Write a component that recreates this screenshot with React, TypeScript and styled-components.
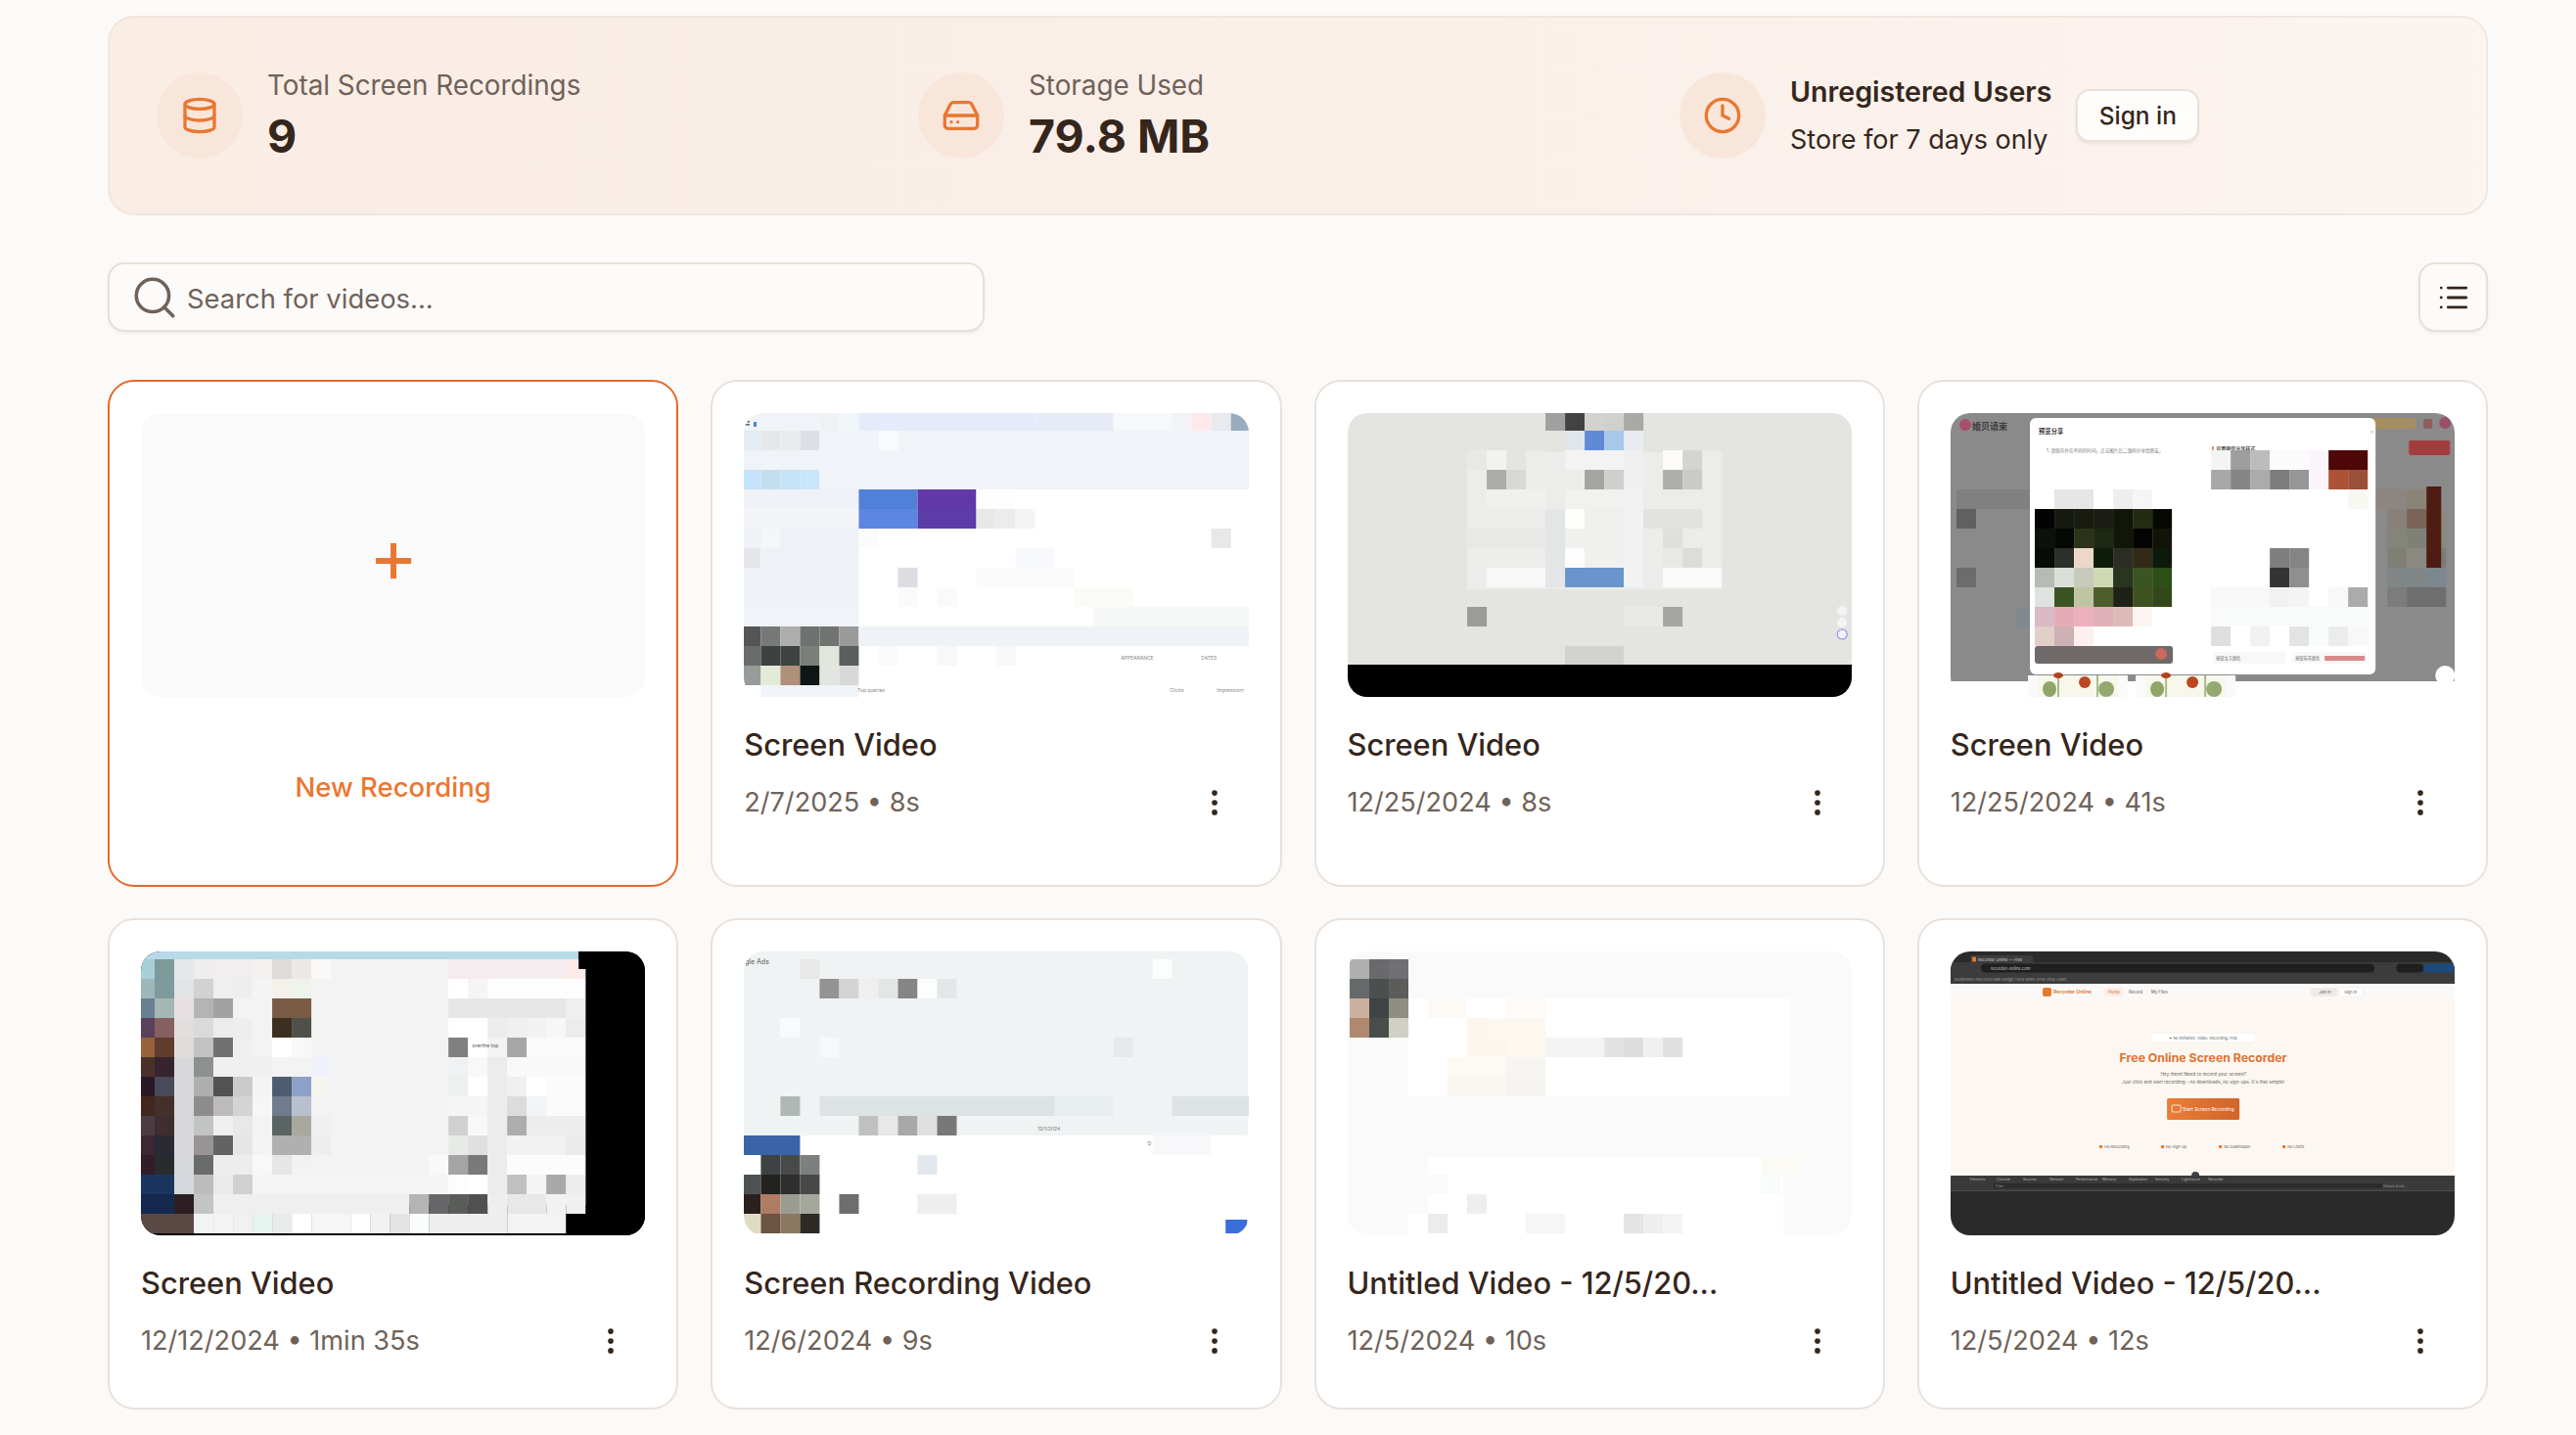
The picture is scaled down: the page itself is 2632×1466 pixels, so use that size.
import styled, { createGlobalStyle } from 'styled-components';
import { Clock, Database, EllipsisVertical, HardDrive, List, Plus, Search } from 'lucide-react';
import type { ReactNode } from 'react';

const GlobalStyle = createGlobalStyle`
  html, body {
    margin: 0;
    padding: 0;
    background: #fcfaf8;
    font-family: Inter, "Noto Sans", sans-serif;
    color: #35261c;
  }
  * {
    box-sizing: border-box;
  }
`;

const Page = styled.main`
  height: 1466px;
  overflow: hidden;
  padding: 16px 90px 0 110px;
`;

const Banner = styled.section`
  display: grid;
  grid-template-columns: repeat(3, 1fr);
  align-items: center;
  height: 204px;
  padding: 0 46px 0 48px;
  border: 2px solid #f0e6de;
  border-radius: 27px;
  background: linear-gradient(90deg, #f9ede4 0%, #faefe9 50%, #fcf4ef 100%);
`;

const Stat = styled.div`
  display: flex;
  align-items: center;
  gap: 25px;
`;

const IconCircle = styled.div`
  display: flex;
  align-items: center;
  justify-content: center;
  flex: none;
  width: 88px;
  height: 88px;
  border-radius: 50%;
  background: #f9e6da;
  color: #ea7731;
`;

const StatText = styled.div`
  padding-bottom: 3px;
`;

const StatLabel = styled.div`
  font-size: 27.8px;
  line-height: 40px;
  color: #6f6259;
`;

const StatValue = styled.div`
  margin-top: 5px;
  font-size: 46.5px;
  font-weight: 700;
  line-height: 54px;
  color: #35261c;
`;

const NoticeTitle = styled.div`
  font-size: 28.6px;
  font-weight: 600;
  line-height: 40px;
`;

const NoticeText = styled.div`
  margin-top: 9px;
  font-size: 27px;
  line-height: 40px;
`;

const SignIn = styled.button`
  flex: none;
  width: 126px;
  height: 54px;
  border: 2px solid #e9e1da;
  border-radius: 14px;
  background: #fffdfc;
  box-shadow: 0 2px 3px rgba(60, 40, 25, 0.08);
  font: 500 24.5px Inter, sans-serif;
  color: #35261c;
`;

const Toolbar = styled.div`
  display: flex;
  align-items: center;
  justify-content: space-between;
  margin-top: 48px;
`;

const SearchBox = styled.label`
  display: flex;
  align-items: center;
  gap: 8px;
  width: 896px;
  height: 71px;
  padding-left: 21px;
  border: 2px solid #e7dfd8;
  border-radius: 17px;
  background: #fdfbf9;
  box-shadow: 0 2px 3px rgba(60, 40, 25, 0.06);
  color: #6f6259;
`;

const SearchInput = styled.input`
  flex: 1;
  padding: 2px 0 0;
  border: 0;
  outline: 0;
  background: transparent;
  font: 400 27.4px Inter, sans-serif;
  color: #6f6259;

  &::placeholder {
    color: #6f6259;
    opacity: 1;
  }
`;

const ViewButton = styled.button`
  display: flex;
  align-items: center;
  justify-content: center;
  width: 71px;
  height: 71px;
  padding: 0;
  border: 2px solid #e7dfd8;
  border-radius: 17px;
  background: #fdfbf9;
  box-shadow: 0 2px 3px rgba(60, 40, 25, 0.06);
  color: #35261c;
`;

const Grid = styled.div`
  display: grid;
  grid-template-columns: repeat(4, 1fr);
  gap: 32px 33px;
  margin-top: 49px;
`;

const Card = styled.article<{ $accent?: boolean }>`
  display: flex;
  flex-direction: column;
  min-width: 0;
  padding: 32px 32px 48px;
  border: 2px solid ${(p) => (p.$accent ? '#e2692d' : '#e9e1da')};
  border-radius: 27px;
  background: #fff;
`;

const NewCard = styled(Card)`
  height: 518px;
`;

const Thumb = styled.div`
  width: 100%;
  height: 290px;
  border-radius: 20px;
  overflow: hidden;
  background: #fff;
`;

const PictureSvg = styled.svg`
  display: block;
  width: 100%;
  height: 100%;
`;

const Placeholder = styled(Thumb)`
  display: flex;
  align-items: center;
  justify-content: center;
  padding-top: 12px;
  background: #fafafa;
  color: #ea7731;
`;

const NewLabel = styled.div`
  margin-top: 72px;
  font-size: 27.5px;
  font-weight: 500;
  line-height: 40px;
  text-align: center;
  color: #ea7731;
`;

const Title = styled.h3`
  margin: 29px 0 0;
  font-size: 30.8px;
  font-weight: 500;
  line-height: 40px;
  white-space: nowrap;
  color: #35261c;
`;

const MetaRow = styled.div`
  display: flex;
  align-items: center;
  justify-content: space-between;
  margin-top: 19px;
  padding-right: 18px;
  height: 40px;
`;

const Meta = styled.span`
  font-size: 27.1px;
  line-height: 40px;
  color: #6f6259;
`;

const MoreIcon = styled(EllipsisVertical)`
  color: #35261c;
`;

/* mosaic thumbnails: each row is "col:color" or "from-to:color", later entries paint over earlier ones */
const Mosaic = ({ ox, oy, rows }: { ox: number; oy: number; rows: string[] }) => (
  <>
    {rows.flatMap((row, r) =>
      row
        .split(' ')
        .filter(Boolean)
        .map((entry, i) => {
          const [span, fill] = entry.split(':');
          const [from, to] = span.split('-').map(Number);
          const count = (to ?? from) - from + 1;
          return (
            <rect key={`${r}-${i}`} x={ox + from * 20} y={oy + r * 20} width={count * 20} height={20} fill={fill} />
          );
        })
    )}
  </>
);

const Picture = ({ children }: { children: ReactNode }) => (
  <PictureSvg viewBox="0 0 515 290" preserveAspectRatio="none" fontFamily="Inter, 'Noto Sans CJK SC', sans-serif">
    {children}
  </PictureSvg>
);

const SearchConsoleThumb = () => (
  <Picture>
    <rect width="515" height="290" fill="#fff" />
    <Mosaic
      ox={-2.6}
      oy={-2}
      rows={[
        '0-3:#f0f4f8 4:#eef2f4 5:#f1f6fb 6-14:#e5ebfa 15-18:#e6ebf7 19-22:#f6f8fb 22:#f2f3f6 23:#fde8ea 24:#e8eaee 25:#9aadc0',
        '0:#e4ecf3 1:#e5e7ea 2:#e9ebee 3:#dcdfe3 4-25:#f0f3f8 7:#f8fafc',
        '0-25:#f0f3f8',
        '0:#c5e3fb 1:#c2deee 2:#c5e2f6 3:#c8e6fc 4-25:#f0f3f8',
        '0-5:#eff2f6 6-8:#5180d8 9-11:#6238a8 12-13:#fdfdfd',
        '0-5:#f2f4f8 6-8:#5b86e2 9-11:#5c3ca8 12:#e8e8e8 13:#ececec 14:#f4f4f4',
        '0-5:#eef1f6 1:#f4f6f9 6:#fbfbfb 24:#e8e8e8',
        '0:#e4e6ea 1-5:#eef1f6 14-15:#f7f9fc',
        '0-5:#eef1f6 8:#dcdce2 12-16:#fafafa',
        '0-5:#eef1f6 8:#fafafa 10:#fafafa 17-19:#fafaf6',
        '0-5:#f0f3f7 18-25:#f6f8f8',
        '0:#555558 1:#777977 2:#aeaeae 3:#6f7270 4:#707370 5:#9a9a9a 6-25:#eff3f7',
        '0:#6a6c6c 1:#3d4240 2:#3e4240 3:#7b7f7c 4:#e2e5dc 5:#5b5e5e 7:#fafafa 10:#f8f8f8 13:#f8f8f8',
        '0:#979c98 1:#e3ebd8 2:#b09078 3:#0f1616 4:#e3e5e0 5:#d8d8d8',
        '1-5:#f0f4f8',
      ]}
    />
    <rect x="0" y="8" width="6" height="1.5" fill="#666" />
    <rect x="0" y="11" width="6" height="1.5" fill="#666" />
    <rect x="10" y="9" width="3" height="5" fill="#4f7fe0" />
    <text x="116" y="285" fontSize="5" fill="#888">Top queries</text>
    <text x="435" y="285" fontSize="5" fill="#888">Clicks</text>
    <text x="483" y="285" fontSize="5" fill="#888">Impressions</text>
    <text x="385" y="252" fontSize="5" fill="#888">APPEARANCE</text>
    <text x="467" y="252" fontSize="5" fill="#888">DATES</text>
  </Picture>
);

const PagesThumb = () => (
  <Picture>
    <rect width="515" height="290" fill="#e4e4e1" />
    <rect x="122" y="40" width="260" height="140" fill="#ececea" />
    <Mosaic
      ox={2}
      oy={-2}
      rows={[
        '10:#a0a0a0 11:#424242 12:#d2d2d0 13:#d0d0ce 14:#a9a9a6',
        '11:#e0e6ea 12:#5f8ad6 13:#a8c8ea 14:#e8ecf2',
        '6:#e8e8e6 7:#f2f2f0 8:#e4e4e2 9:#ececea 11-13:#f3f3f3 14:#eef0f2 16:#fdfcfa 17:#d4d4d2 18:#ececea',
        '7:#acacaa 8:#d8d8d6 9:#ececea 12:#a4a4a2 13:#cfcfcd 14:#eef0f2 16:#adadab 17:#cacac8',
        '7-9:#f0f0ee 11-13:#f1f1ef 14:#f0f2f4',
        '7-9:#ececea 10:#e2e6e6 11:#fdfdfc 12-13:#efefed 14:#f0f2f4 15-17:#e2e2e0',
        '6-9:#e8e8e6 10:#e2e6e6 11-13:#f0f0ee 14:#f0f2f4 16:#dfdfdd',
        '6-9:#ededeb 10:#e2e6e6 11:#fdfdfd 12-13:#f0f0ee 14:#f0f2f4 16:#e8e8e6 17:#dcdcda',
        '6:#ececea 7-9:#f8f8f8 10:#e2e6e6 11-13:#6a94cc 14:#f0f2f4 15:#ececea 16-18:#fafafa',
        '',
        '6:#9c9c9a 13:#e4e4e2 14-15:#e9e9e7 16:#a5a5a3',
        '',
        '11-13:#d2d2d0',
      ]}
    />
    <rect y="257" width="515" height="33" fill="#000" />
    <circle cx="505" cy="202" r="5" fill="#f4f4f4" />
    <circle cx="505" cy="214" r="5" fill="#f4f4f4" />
    <circle cx="505" cy="226" r="5" fill="#f0f0ff" stroke="#8a8ae0" strokeWidth="1" />
  </Picture>
);

const PlantCard = ({ x }: { x: number }) => (
  <g>
    <rect x={x} y="268" width="102" height="22" fill="#fafafa" />
    <rect x={x + 10} y="268" width="82" height="22" fill="#f7f7ec" />
    <ellipse cx={x + 22} cy="282" rx="7" ry="8" fill="#8fa56a" />
    <rect x={x + 30} y="268" width="2" height="22" fill="#a9ba88" />
    <ellipse cx={x + 80} cy="282" rx="8" ry="8" fill="#93a970" />
    <rect x={x + 70} y="268" width="2" height="22" fill="#a9ba88" />
    <ellipse cx={x + 31} cy="268" rx="5" ry="3" fill="#b2401f" />
    <circle cx={x + 58} cy="275" r="6" fill="#bc4720" />
  </g>
);

const WeddingThumb = () => (
  <Picture>
    <rect width="515" height="290" fill="#fff" />
    <rect width="515" height="274" fill="#8a8a8a" />
    <circle cx="15" cy="12" r="6" fill="#a8506a" />
    <text x="15" y="13" fontSize="9" fill="#3d3d3d" fontWeight="600" dy="4" dx="7">婚贝请柬</text>
    <rect x="429" y="5" width="46" height="11" rx="3" fill="#a68e60" />
    <rect x="483" y="6" width="9" height="10" rx="2" fill="#8f5c5c" />
    <circle cx="505" cy="10" r="6" fill="#9a5064" />
    <rect x="468" y="28" width="42" height="15" rx="2" fill="#a33d3d" />
    <Mosaic
      ox={6}
      oy={-2}
      rows={[
        '',
        '',
        '',
        '',
        '0-3:#808080 21-23:#8c8580 23:#8c8378',
        '0:#5f6160 22:#88807a 23:#7a6458 24:#8c8a80',
        '22:#84847a 23:#7e8276 24:#868a7a',
        '22:#7e8074 23:#8a8880 24:#7c7c76',
        '0:#6c6c6c 22-23:#808686 24:#7c8890',
        '22:#7c7c7c 23-24:#6e6e6e',
        '3:#828890',
      ]}
    />
    <rect x="486" y="75" width="15" height="83" fill="#4f1c14" />
    <rect x="81" y="5" width="353" height="262" rx="6" fill="#fff" />
    <text x="90" y="21" fontSize="6.3" fontWeight="700" fill="#333">预览分享</text>
    <text x="428" y="21" fontSize="6" fill="#aaa">×</text>
    <text x="98" y="40" fontSize="4.6" fill="#777">1. 请保存并在不同的时间，点击图片后二维码分享给朋友，</text>
    <rect x="267" y="34" width="1.6" height="5" fill="#e57373" />
    <text x="271" y="38" fontSize="5" fontWeight="600" fill="#444">设置微信分享样式</text>
    <Mosaic
      ox={6}
      oy={-2}
      rows={[
        '',
        '',
        '13:#f4f4f4 14:#9e9e9e 15:#bcbcbc 16-17:#fbfbfb 18:#faf5fa 19-20:#4e0808',
        '13:#a8a8a8 14:#858585 15:#ababab 16:#7d7d7d 17:#969696 18:#fbf5fb 19:#ad5335 20:#9b503a',
        '5-6:#e6e6e6 8:#eeeeee 9:#f6f6f6 20:#f7f8f2',
        '4:#030402 5:#15190f 6:#181c10 7:#1b1c14 8:#12150a 9:#232b12 10:#060803',
        '4:#0a120a 5:#050804 6:#2d3319 7:#1e2914 8:#111708 9:#040503 10:#11140a',
        '4:#050d04 5:#2d302a 6:#ecd8c8 7:#101c0a 8:#2c2e26 9:#322a17 10:#0c1a0e 16:#7e7e7e 17:#858585',
        '4:#b4bcb4 5:#dadfd8 6:#c8cabc 7:#d0d8b4 8:#29351f 9:#3c5424 10:#2e4f18 16:#333333 17:#8f8f8f',
        '4:#dfe3df 5:#3a5424 6:#c0c4a0 7:#4f5c2c 8:#1e2116 9:#3f5220 10:#33481a 13-15:#f8f8f8 16:#f1f1f1 17:#f4f4f4 19:#f8f8f8 20:#ababab',
        '4:#dbb9c6 5:#e5acb8 6:#ecb0bf 7:#dfb0ba 8:#dcbcb8 9:#fdf4f2 13-20:#f9fbfb',
        '4:#e2cfc8 5:#ccb0b4 6:#fdf0ee 13:#dfdfdf 15:#f0f2f0 17:#e3e3e3 18:#f7fbfb 19:#ececec 20:#f8f8f8',
      ]}
    />
    <rect x="86" y="238" width="141" height="18" rx="3" fill="#6f6969" />
    <circle cx="215" cy="246" r="6" fill="#c96a5c" />
    <rect x="268" y="244" width="75" height="12" rx="3" fill="#f8f8f8" />
    <rect x="349" y="244" width="76" height="12" rx="3" fill="#f8f8f8" />
    <rect x="382" y="248" width="41" height="5" fill="#d98a8a" />
    <text x="271" y="252" fontSize="4.2" fill="#666">按钮文字颜色</text>
    <text x="352" y="252" fontSize="4.2" fill="#666">按钮背景颜色</text>
    <PlantCard x={79} />
    <PlantCard x={189} />
    <circle cx="505" cy="268" r="10" fill="#fff" />
  </Picture>
);

const DesktopThumb = () => (
  <Picture>
    <rect width="515" height="290" fill="#000" />
    <rect x="0" y="0" width="447" height="8" fill="#b8dae8" />
    <rect x="34" y="8" width="420" height="251" fill="#f3f3f3" />
    <Mosaic
      ox={-6}
      oy={8}
      rows={[
        '0:#a7d0d8 1:#7d9a9a 2:#e5e7e8 3:#efeded 4-5:#f0eeee 6:#f6f1f1 7:#dfdbdb 8:#ece8e8 9:#fbf8f8 16-21:#f3edef 22:#fbeae8',
        '0:#9db8b8 1:#7f9a9c 2:#e2e3e4 3:#d2d2d0 4:#efefef 5:#eeeeee 6:#f4f4f4 7:#f4f1ea 8:#eef3ec 16:#ffffff 17:#f5f5f5 18-22:#fdfdfd',
        '0:#6a8090 1:#a4b7b4 2:#e7e0e2 3:#b4b4b4 4:#a2a2a2 7-8:#7a5c46 16-21:#e7e7e7 22:#efefef',
        '0:#5a405a 1:#85605e 2:#e2dede 3:#dadada 4:#ececec 5:#eeeeee 7:#3d2f20 8:#4f504a 16-17:#ffffff 18:#ededed 19:#f0f0f0 20:#f1f2f1 21:#f7f7f7 22:#ececec',
        '0:#96623c 1:#5f3c2c 2:#e0dcda 3:#c2c2c2 4:#707270 5:#efefef 7:#ffffff 8:#f8f8f8 16:#808080 17:#ffffff 19:#a6a6a6 20-22:#fafafa',
        '0:#4a302a 1:#362430 2:#d8d8da 3:#8c908e 4-6:#f0f0f0 9:#eff2fa 16:#f0f1f3 17:#f8f8f8 18:#ececec 19-22:#f9f9f9',
        '0:#2a1828 1:#474a58 2:#d8d8dc 3:#aeaeae 4:#525252 5:#cbcbcb 6:#f4f4f4 7:#4d5c70 8:#8ca0c8 9:#f5f4ee 16:#eef0ef 17:#ffffff 18:#ececec 19:#f0f0f0 20:#ffffff 21-22:#fbfbfb',
        '0:#43261e 1:#44302a 2:#d8d8dc 3:#8e8c8c 4:#bcbaba 5:#d4d4d4 6:#f6f6f6 7:#6e7c8e 8:#b8c0d0 16-17:#f4f5f4 18:#ececec 19:#dcdcdc 20:#f3f4f6 21-22:#fafafa',
        '0:#4a3c40 1:#3e2e30 2:#d8d8dc 3:#c2c4c2 4:#f0f0f0 5:#e8e8e8 7:#5a6462 8:#a8a89e 9:#f0eff2 16:#d0d0d2 17:#f8f8f8 18:#ececec 19:#adadad 20-22:#ededed',
        '0:#3c2832 1:#2a2a34 2:#d8d8dc 3:#989494 4:#636363 5:#e6e6e6 6:#f3f3f3 7-8:#b0b0b0 9:#eeeeee 16:#e8eae8 17:#e0e0e0 18:#ececec 19-21:#f2f2f2 22:#ebebeb',
        '0:#321c2a 1:#292a2e 2:#d6d8dc 3:#6a6c6a 4-5:#ededed 6:#f8f8f8 7:#e6e6e6 8:#f2f2f2 15:#f9f9f9 16:#a4a4a4 17:#797979 18:#ececec 19-22:#fcfcfc',
        '0-1:#1c3460 2:#d4d8dc 3:#bcbcbc 4:#eaeaea 5:#d0d0d0 6-15:#f5f5f5 16:#fdfdfd 17:#ffffff 18:#ececec 19:#c0c0c0 20:#f4f4f4 21:#a9a9a9 22:#ededed',
        '0-1:#15294e 2:#2c1e22 3:#c4c4c4 4-13:#efefef 14:#b4b4b4 15:#666668 16:#5a5c5a 17:#505050 18:#eeeeee 19-20:#e8e8e8 21:#f2f2f4 22:#f0f0f0',
        '0-2:#5a4844 3:#f1f4f2 4:#f4f4f4 5:#f1f1f1 6:#e6f4ee 7:#e9ebea 8:#ffffff 9-10:#f6f6f6 11:#ffffff 12:#f2f2f2 13:#e4e4e4 14:#f9fdfd 15-18:#eeeeee 19-21:#f3f3f3',
      ]}
    />
    <rect x="447" y="0" width="68" height="18" fill="#000" />
    <rect x="455" y="256" width="60" height="34" fill="#000" />
    <rect x="447" y="272" width="8" height="18" fill="#000" />
    <text x="338" y="98" fontSize="5" fill="#555">overthe top</text>
  </Picture>
);

const AdsThumb = () => (
  <Picture>
    <rect width="515" height="290" fill="#fff" />
    <rect width="515" height="188" fill="#eff3f3" />
    <Mosaic
      ox={-2.6}
      oy={8}
      rows={[
        '3:#e8e8e8 21:#fcfefe',
        '4:#959292 5:#d4d4d4 6:#efefef 7:#e4e6e6 8:#858585 9:#fdfdfd 10:#e3e7e7',
        '',
        '2:#f8fbfb',
        '19:#e4e9e9 4:#f6f9f9',
        '',
        '',
        '2:#b0b8b6 4-15:#dde2e2 16-18:#e8eded 22-25:#dde2e2',
        '6:#c0c0c0 7:#e8e8e8 8:#a8a8a8 9:#e0e0e0 10:#787878',
        '0-2:#3a64a8 21-23:#f8f8fa',
        '1:#3d4244 2:#484a4a 3:#7e8080 9:#e2e8ee',
        '0:#4f5252 1:#23221f 2:#2e2e2e 3:#484848',
        '0:#2a211e 1:#b07c64 2:#9a9c90 3:#a4a89c 5:#6e6e6e 9-10:#eeeeee',
        '0:#e0dcc4 1:#6c5444 2:#8c7860 3:#2e2a26',
      ]}
    />
    <rect x="492" y="274" width="22" height="14" fill="#3a6ed8" />
    <text x="1" y="13" fontSize="7" fill="#555">gle Ads</text>
    <text x="300" y="183" fontSize="5" fill="#777">12/1/2024</text>
    <text x="412" y="198" fontSize="5" fill="#777">Q</text>
  </Picture>
);

const BlankThumb = () => (
  <Picture>
    <rect width="515" height="290" fill="#fafafa" />
    <rect x="62" y="48" width="390" height="100" fill="#fff" />
    <rect x="62" y="210" width="383" height="80" fill="#fff" />
    <Mosaic
      ox={2}
      oy={8}
      rows={[
        '0:#b0b0b0 1:#6a6a6c 2:#707074',
        '0:#666a6a 1:#4a5050 2:#5c5c5a',
        '0:#ccb0a0 1:#404444 2:#8e8e82 4-5:#fdf9f5 8-9:#fefbf8',
        '0:#b08870 1:#4a4e4a 2:#d0d0c4 6:#fdf6ee 7-9:#fdf8ef',
        '1:#fafafa 6-7:#fdf6ee 8-9:#fff8ee 10-12:#f4f4f4 13:#e2e2e2 14:#dcdcdc 15:#f0f0f0 16:#e0e0e0',
        '5-7:#fdf9f4 8-9:#f7f5f2',
        '5-7:#faf7f3 8-9:#f6f4f1',
        '',
        '',
        '3:#fafafa',
        '3:#fafafa 21-22:#fbfaf5',
        '3-4:#fafafa 21:#f8fcfc',
        '3:#fafafa 4:#fff 6:#eeeeee',
        '4:#ececec 9-10:#f6f6f6 14:#e4e4e4 15:#eeeeee 16:#f4f4f4',
      ]}
    />
  </Picture>
);

const devtoolTabs = ['Elements', 'Console', 'Sources', 'Network', 'Performance', 'Memory', 'Application', 'Security', 'Lighthouse', 'Recorder'];

const RecorderThumb = () => (
  <Picture>
    <defs>
      <linearGradient id="cta" x1="0" x2="1" y1="0" y2="0">
        <stop offset="0" stopColor="#ea7d36" />
        <stop offset="1" stopColor="#d0652a" />
      </linearGradient>
    </defs>
    <rect width="515" height="290" fill="#2a2a2a" />
    <rect x="20" y="4" width="64" height="8" fill="#3c3c3c" />
    <rect x="22" y="5.500" width="4" height="5" rx="1" fill="#e8772e" />
    <text x="28" y="10" fontSize="4" fill="#cfcfcf">Recorder Online — Free</text>
    <rect y="11" width="515" height="22" fill="#3c3c3c" />
    <rect x="31" y="12.500" width="402" height="9" rx="4.500" fill="#1f1f1f" />
    <text x="41" y="19" fontSize="4.200" fill="#c8c8c8">recorder-online.com</text>
    <rect x="455" y="12.500" width="28" height="9" rx="4.500" fill="#1f1f1f" />
    <rect x="483" y="12.500" width="32" height="9" rx="4.500" fill="#1d4a7d" />
    <text x="4" y="30" fontSize="3.800" fill="#9a9a9a">Bookmarks  Ads  Docs  Mail  Design  Tools  News  Drive  Shop  Learn</text>
    <rect y="33" width="515" height="17" fill="#fbf9f7" />
    <rect y="50" width="515" height="179" fill="#fdf7f2" />
    <rect x="94" y="37" width="9" height="9" rx="2" fill="#e8772e" />
    <text x="105" y="43.500" fontSize="5" fontWeight="600" fill="#d9702e">Recorder Online</text>
    <rect x="157" y="37" width="19" height="9" rx="3" fill="#fcece2" />
    <text x="161" y="43.500" fontSize="4.200" fill="#d9702e">Home</text>
    <text x="182" y="43.500" fontSize="4.200" fill="#555">Record</text>
    <text x="205" y="43.500" fontSize="4.200" fill="#555">My Files</text>
    <rect x="368" y="37" width="27" height="9" rx="2" fill="#eeebe8" />
    <rect x="397" y="37" width="24" height="9" rx="2" fill="#fff" stroke="#e8e2dc" strokeWidth="0.500" />
    <text x="376" y="43.500" fontSize="4" fill="#555">Join in</text>
    <text x="402" y="43.500" fontSize="4" fill="#555">Sign in</text>
    <rect x="204" y="83" width="108" height="10" rx="5" fill="#fff" stroke="#f3e6dc" strokeWidth="0.500" />
    <text x="258" y="90" fontSize="3.800" fill="#666" textAnchor="middle">✦ No limitation. Video. Recording. Free</text>
    <text x="258" y="113.500" fontSize="12.300" fontWeight="700" fill="#de7331" textAnchor="middle">Free Online Screen Recorder</text>
    <text x="258" y="127" fontSize="4.700" fill="#666" textAnchor="middle">Hey there! Need to record your screen?</text>
    <text x="258" y="135" fontSize="4.700" fill="#666" textAnchor="middle">Just click and start recording – no downloads, no sign-ups. It&apos;s that simple!</text>
    <rect x="221" y="150" width="74" height="22" rx="1.500" fill="url(#cta)" />
    <rect x="226" y="157" width="9" height="7" rx="1" fill="none" stroke="#fff" strokeWidth="0.800" />
    <text x="237" y="163" fontSize="4.800" fill="#fff">Start Screen Recording</text>
    {[
      [152, 'HD Recording'],
      [215, 'No Sign-up'],
      [274, 'No Downloads'],
      [339, 'No Limits'],
    ].map(([x, label]) => (
      <g key={label}>
        <rect x={Number(x)} y="198" width="3" height="3" fill="#e8772e" />
        <text x={Number(x) + 5} y="201.500" fontSize="3.900" fill="#666">{label}</text>
      </g>
    ))}
    <circle cx="250" cy="229" r="4" fill="#3b4450" />
    <rect y="229" width="515" height="15" fill="#3a3a3a" />
    <rect y="244" width="515" height="0.800" fill="#555" />
    <g fontSize="3.600" fill="#b8b8b8">
      {devtoolTabs.map((tab, i) => (
        <text key={tab} x={20 + i * 27} y="234">{tab}</text>
      ))}
    </g>
    <rect x="44" y="237" width="397" height="5" rx="1" fill="#2c2c2c" />
    <text x="46" y="241" fontSize="3.400" fill="#999">Filter</text>
    <text x="442" y="241" fontSize="3.400" fill="#999">Default levels</text>
  </Picture>
);

interface VideoCardProps {
  title: string;
  meta: string;
  children: ReactNode;
}

const VideoCard = ({ title, meta, children }: VideoCardProps) => (
  <Card>
    <Thumb>{children}</Thumb>
    <Title>{title}</Title>
    <MetaRow>
      <Meta>{meta}</Meta>
      <MoreIcon size={34} strokeWidth={2} />
    </MetaRow>
  </Card>
);

export default function App() {
  return (
    <Page>
      <GlobalStyle />
      <Banner>
        <Stat>
          <IconCircle>
            <Database size={40} strokeWidth={2} />
          </IconCircle>
          <StatText>
            <StatLabel>Total Screen Recordings</StatLabel>
            <StatValue>9</StatValue>
          </StatText>
        </Stat>
        <Stat>
          <IconCircle>
            <HardDrive size={40} strokeWidth={2} />
          </IconCircle>
          <StatText>
            <StatLabel>Storage Used</StatLabel>
            <StatValue>79.8 MB</StatValue>
          </StatText>
        </Stat>
        <Stat>
          <IconCircle>
            <Clock size={40} strokeWidth={2} />
          </IconCircle>
          <div>
            <NoticeTitle>Unregistered Users</NoticeTitle>
            <NoticeText>Store for 7 days only</NoticeText>
          </div>
          <SignIn>Sign in</SignIn>
        </Stat>
      </Banner>

      <Toolbar>
        <SearchBox>
          <Search size={50} strokeWidth={1.7} />
          <SearchInput placeholder="Search for videos..." />
        </SearchBox>
        <ViewButton>
          <List size={34} strokeWidth={2} />
        </ViewButton>
      </Toolbar>

      <Grid>
        <NewCard $accent>
          <Placeholder>
            <Plus size={62} strokeWidth={2.3} strokeLinecap="butt" />
          </Placeholder>
          <NewLabel>New Recording</NewLabel>
        </NewCard>
        <VideoCard title="Screen Video" meta="2/7/2025 • 8s">
          <SearchConsoleThumb />
        </VideoCard>
        <VideoCard title="Screen Video" meta="12/25/2024 • 8s">
          <PagesThumb />
        </VideoCard>
        <VideoCard title="Screen Video" meta="12/25/2024 • 41s">
          <WeddingThumb />
        </VideoCard>
        <VideoCard title="Screen Video" meta="12/12/2024 • 1min 35s">
          <DesktopThumb />
        </VideoCard>
        <VideoCard title="Screen Recording Video" meta="12/6/2024 • 9s">
          <AdsThumb />
        </VideoCard>
        <VideoCard title="Untitled Video - 12/5/20..." meta="12/5/2024 • 10s">
          <BlankThumb />
        </VideoCard>
        <VideoCard title="Untitled Video - 12/5/20..." meta="12/5/2024 • 12s">
          <RecorderThumb />
        </VideoCard>
      </Grid>
    </Page>
  );
}
